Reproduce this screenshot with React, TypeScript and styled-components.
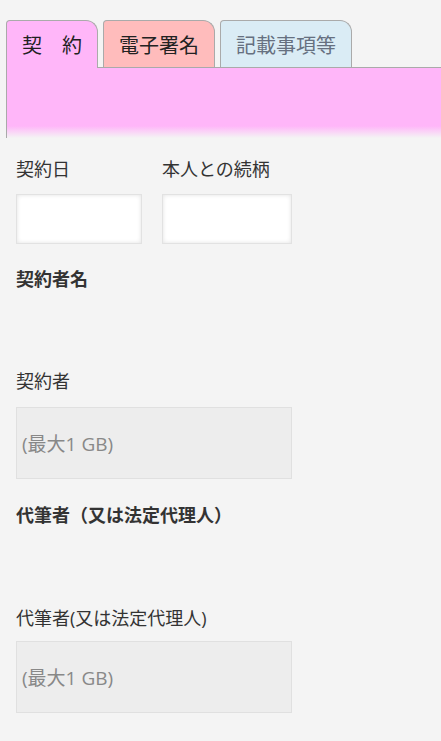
import React from "react";
import styled, { createGlobalStyle } from "styled-components";

const Global = createGlobalStyle`
  html, body { margin: 0; padding: 0; background: #f4f4f4; }
  body { font-family: "Open Sans", "Noto Sans CJK JP", sans-serif; color: #333; }
`;

const Page = styled.div`
  width: 441px;
  min-height: 741px;
  padding-top: 20px;
  box-sizing: border-box;
`;

const TabBar = styled.div`
  display: flex;
  align-items: flex-end;
  gap: 5px;
  padding-left: 6px;
`;

const Tab = styled.div<{ $bg: string; $fg: string; $active?: boolean }>`
  position: relative;
  z-index: ${(p) => (p.$active ? 2 : 1)};
  box-sizing: border-box;
  padding: 0 15px;
  display: flex;
  align-items: center;
  font-family: "Noto Sans CJK JP", sans-serif;
  font-size: 20px;
  color: ${(p) => p.$fg};
  background: ${(p) => p.$bg};
  border: 1px solid #aaa;
  border-bottom: none;
  border-radius: 4px 12px 0 0;
  margin-bottom: ${(p) => (p.$active ? "-1px" : "0")};
  height: ${(p) => (p.$active ? "48px" : "47px")};
  padding-bottom: ${(p) => (p.$active ? "1px" : "0")};
`;

const Panel = styled.div`
  margin-left: 6px;
  height: 70px;
  border-top: 1px solid #aaa;
  border-left: 1px solid #aaa;
  background: linear-gradient(
    to bottom,
    #ffb6f9 0,
    #ffb6f9 58px,
    rgba(244, 244, 244, 0) 70px
  );
`;

const Form = styled.div`
  padding: 19px 0 0 16px;
`;

const Row = styled.div`
  display: flex;
  gap: 20px;
`;

const Field = styled.div<{ $w: number }>`
  width: ${(p) => p.$w}px;
  display: flex;
  flex-direction: column;
  gap: 12px;
`;

const Label = styled.div<{ $bold?: boolean }>`
  font-size: 18px;
  line-height: 25px;
  font-weight: ${(p) => (p.$bold ? 700 : 400)};
  color: #333;
  white-space: nowrap;
`;

const Input = styled.div`
  height: 50px;
  box-sizing: border-box;
  background: #fff;
  border: 1px solid #e2e2e2;
  box-shadow: inset 0 0 4px rgba(0, 0, 0, 0.12);
`;

const Heading = styled(Label)<{ $mt: number }>`
  margin-top: ${(p) => p.$mt}px;
`;

const FieldLabel = styled(Label)<{ $mt: number }>`
  margin-top: ${(p) => p.$mt}px;
`;

const FileBox = styled.div<{ $mt: number }>`
  margin-top: ${(p) => p.$mt}px;
  width: 276px;
  height: 72px;
  box-sizing: border-box;
  background: #ededed;
  border: 1px solid #e0e0e0;
  display: flex;
  align-items: center;
  padding-left: 5px;
  font-size: 19px;
  color: #888;
`;

export default function App() {
  return (
    <Page>
      <Global />
      <TabBar>
        <Tab $bg="#ffb6f9" $fg="#222" $active>契　約</Tab>
        <Tab $bg="#ffbcbc" $fg="#222">電子署名</Tab>
        <Tab $bg="#daecf5" $fg="#667080">記載事項等</Tab>
      </TabBar>
      <Panel />
      <Form>
        <Row>
          <Field $w={126}>
            <Label>契約日</Label>
            <Input />
          </Field>
          <Field $w={130}>
            <Label>本人との続柄</Label>
            <Input />
          </Field>
        </Row>
        <Heading $bold $mt={23}>契約者名</Heading>
        <FieldLabel $mt={77}>契約者</FieldLabel>
        <FileBox $mt={13}>(最大1 GB)</FileBox>
        <Heading $bold $mt={24}>代筆者（又は法定代理人）</Heading>
        <FieldLabel $mt={78}>代筆者(又は法定代理人)</FieldLabel>
        <FileBox $mt={10}>(最大1 GB)</FileBox>
      </Form>
    </Page>
  );
}
